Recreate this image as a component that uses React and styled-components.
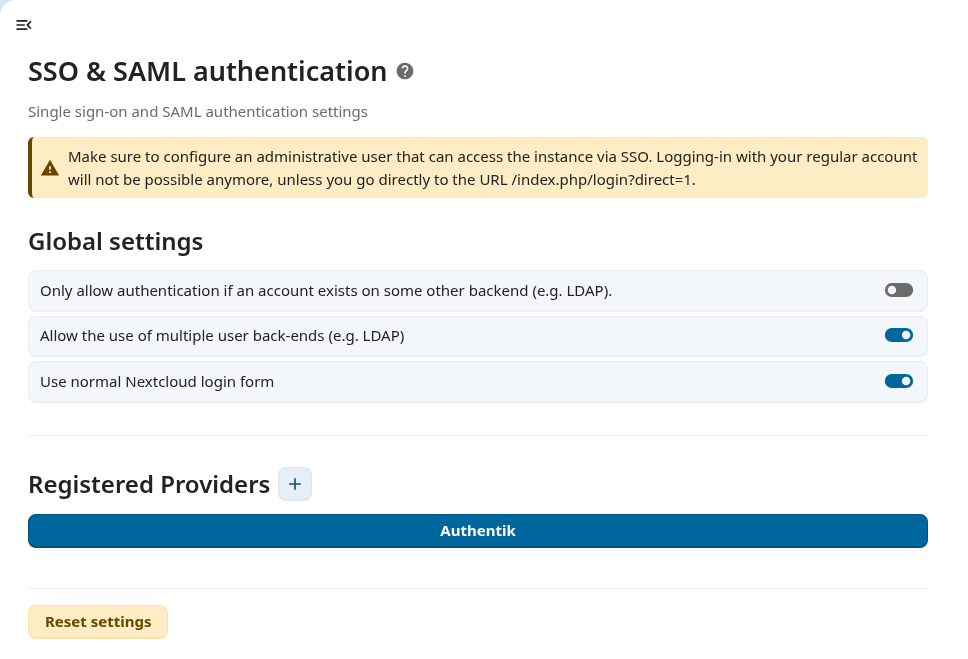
import React from "react";
import styled, { createGlobalStyle } from "styled-components";

const GlobalStyle = createGlobalStyle`
  html, body {
    margin: 0;
    padding: 0;
    height: 100%;
    background-color: #d6e6f1;
    font-family: "Noto Sans", sans-serif;
    color: #222222;
  }
  #root {
    height: 100%;
  }
`;

const Page = styled.main`
  box-sizing: border-box;
  height: 659px;
  overflow: hidden;
  background-color: #ffffff;
  border-top-left-radius: 16px;
  will-change: transform;
`;

const MenuBar = styled.div`
  display: flex;
  align-items: center;
  height: 20px;
  padding: 15px 0 0 14px;
`;

const Content = styled.div`
  padding: 0 40px 0 28px;
`;

const TitleRow = styled.div`
  display: flex;
  align-items: center;
  gap: 7px;
  margin-top: 14px;
  height: 44px;
`;

const Title = styled.h2`
  margin: 0;
  font-size: 27px;
  line-height: 44px;
  font-weight: 600;
`;

const Description = styled.p`
  margin: 6px 0 0;
  font-size: 15px;
  line-height: 24px;
  color: #6b6b6b;
`;

const Alert = styled.div`
  display: flex;
  align-items: center;
  gap: 8px;
  box-sizing: border-box;
  height: 61px;
  margin-top: 14px;
  padding: 0 10px 0 8px;
  background-color: #fdedc5;
  border-left: 4px solid #664700;
  border-radius: 6px;
  font-size: 15px;
  line-height: 23px;
`;

const SectionTitle = styled.h3`
  margin: 0;
  font-size: 24px;
  line-height: 32px;
  font-weight: 600;
`;

const GlobalTitle = styled(SectionTitle)`
  margin: 27px 0 13px;
`;

const Rows = styled.div`
  display: flex;
  flex-direction: column;
  gap: 4px;
`;

const Row = styled.div`
  display: flex;
  align-items: center;
  justify-content: space-between;
  box-sizing: border-box;
  height: 41.5px;
  padding: 0 11px 1px 11px;
  background-color: #f3f7fa;
  border: 1px solid #ebeff3;
  border-bottom-width: 2px;
  border-radius: 8px;
  font-size: 15px;
`;

const Divider = styled.hr`
  margin: ${(props) => props.$top}px 0 0;
  border: none;
  border-top: 1px solid #ebebeb;
`;

const ProviderHeader = styled.div`
  display: flex;
  align-items: center;
  gap: 8px;
  margin-top: 31px;
  height: 34px;
`;

const AddButton = styled.button`
  display: flex;
  align-items: center;
  justify-content: center;
  box-sizing: border-box;
  width: 34px;
  height: 34px;
  padding: 0;
  background-color: #e6eff5;
  border: 1px solid #dbe6ee;
  border-bottom-width: 2px;
  border-radius: 8px;
  color: #1f4a66;
`;

const ProviderButton = styled.button`
  display: block;
  box-sizing: border-box;
  width: 100%;
  height: 34px;
  margin-top: 13px;
  padding: 0 0 2px;
  background-color: #00679e;
  border: 1px solid #00527e;
  border-bottom-width: 2px;
  border-radius: 8px;
  color: #ffffff;
  font-family: inherit;
  font-size: 15px;
  font-weight: 700;
`;

const ResetButton = styled.button`
  display: block;
  box-sizing: border-box;
  height: 34px;
  margin-top: 16px;
  padding: 0 16px 2px;
  background-color: #fdedc5;
  border: 1px solid #fde2a6;
  border-bottom-width: 2px;
  border-radius: 8px;
  color: #664700;
  font-family: inherit;
  font-size: 15px;
  font-weight: 700;
`;

const Icon = ({ d, size = 20, color = "currentColor" }) => (
  <svg width={size} height={size} viewBox="0 0 24 24" fill={color} style={{ flexShrink: 0 }}>
    <path d={d} />
  </svg>
);

const paths = {
  menuOpen: "M21,15.61L19.59,17L14.58,12L19.59,7L21,8.39L17.44,12L21,15.61M3,6H16V8H3V6M3,13V11H13V13H3M3,18V16H16V18H3Z",
  help: "M15.07,11.25L14.17,12.17C13.45,12.89 13,13.5 13,15H11V14.5C11,13.39 11.45,12.39 12.17,11.67L13.41,10.41C13.78,10.05 14,9.55 14,9C14,7.89 13.1,7 12,7A2,2 0 0,0 10,9H8A4,4 0 0,1 12,5A4,4 0 0,1 16,9C16,9.88 15.64,10.67 15.07,11.25M13,19H11V17H13M12,2A10,10 0 0,0 2,12C2,17.53 6.47,22 12,22C17.5,22 22,17.5 22,12C22,6.47 17.53,2 12,2Z",
  alert: "M13 14H11V10H13M13 18H11V16H13M1 21H23L12 2L1 21Z",
  plus: "M19,13H13V19H11V13H5V11H11V5H13V11H19V13Z",
  toggleOn: "M17,7H7A5,5 0 0,0 2,12A5,5 0 0,0 7,17H17A5,5 0 0,0 22,12A5,5 0 0,0 17,7M17,15A3,3 0 0,1 14,12A3,3 0 0,1 17,9A3,3 0 0,1 20,12A3,3 0 0,1 17,15Z",
  toggleOff: "M17,7H7A5,5 0 0,0 2,12A5,5 0 0,0 7,17H17A5,5 0 0,0 22,12A5,5 0 0,0 17,7M7,15A3,3 0 0,1 4,12A3,3 0 0,1 7,9A3,3 0 0,1 10,12A3,3 0 0,1 7,15Z",
};

const settings = [
  { label: "Only allow authentication if an account exists on some other backend (e.g. LDAP).", on: false },
  { label: "Allow the use of multiple user back-ends (e.g. LDAP)", on: true },
  { label: "Use normal Nextcloud login form", on: true },
];

const App = () => (
  <>
    <GlobalStyle />
    <Page>
      <MenuBar>
        <Icon d={paths.menuOpen} color="#222222" />
      </MenuBar>
      <Content>
        <TitleRow>
          <Title>SSO &amp; SAML authentication</Title>
          <Icon d={paths.help} color="#6b6b6b" />
        </TitleRow>
        <Description>Single sign-on and SAML authentication settings</Description>
        <Alert>
          <Icon d={paths.alert} color="#664700" />
          <span>
            Make sure to configure an administrative user that can access the instance via SSO. Logging-in with your
            regular account will not be possible anymore, unless you go directly to the URL /index.php/login?direct=1.
          </span>
        </Alert>
        <GlobalTitle>Global settings</GlobalTitle>
        <Rows>
          {settings.map((item) => (
            <Row key={item.label}>
              <span>{item.label}</span>
              <Icon
                d={item.on ? paths.toggleOn : paths.toggleOff}
                size={34}
                color={item.on ? "#00679e" : "#6b6b6b"}
              />
            </Row>
          ))}
        </Rows>
        <Divider $top={32.5} />
        <ProviderHeader>
          <SectionTitle>Registered Providers</SectionTitle>
          <AddButton aria-label="Add">
            <Icon d={paths.plus} />
          </AddButton>
        </ProviderHeader>
        <ProviderButton>Authentik</ProviderButton>
        <Divider $top={40} />
        <ResetButton>Reset settings</ResetButton>
      </Content>
    </Page>
  </>
);

export default App;
